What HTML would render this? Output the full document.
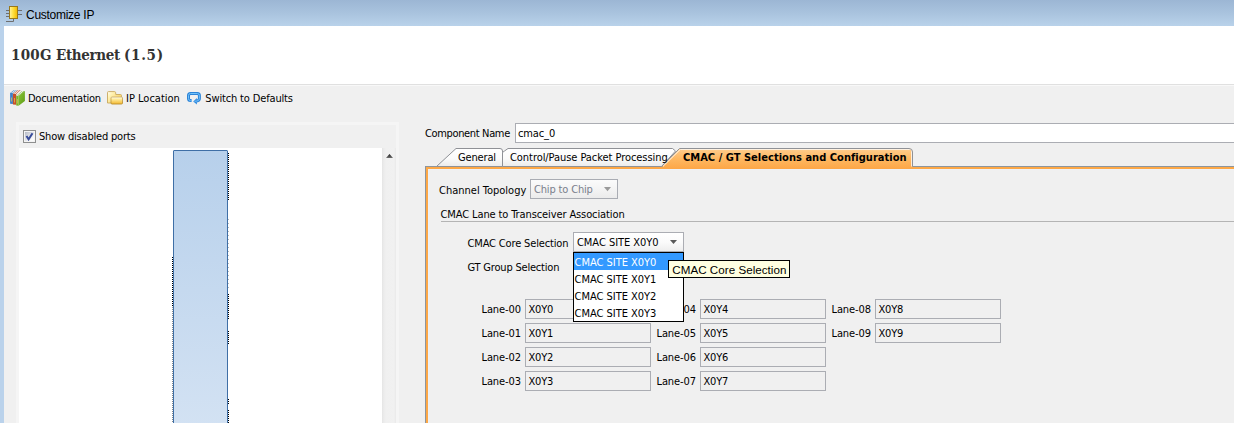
<!DOCTYPE html>
<html>
<head>
<meta charset="utf-8">
<title>Customize IP</title>
<style>
html,body{margin:0;padding:0;background:#fff;}
body{width:1236px;height:425px;overflow:hidden;position:relative;font-family:"Liberation Sans",sans-serif;font-size:11px;color:#000;}
#win{position:absolute;left:0;top:0;width:1234px;height:423px;overflow:hidden;background:#f0f0f0;}
.abs{position:absolute;}
.t{position:absolute;white-space:nowrap;line-height:14px;height:14px;font-size:11px;color:#000;font-family:"DejaVu Sans Condensed","Liberation Sans",sans-serif;}
.b{font-weight:bold;}
#titlebar{left:0;top:0;width:1234px;height:26px;background:linear-gradient(#9cb6d4 0%,#a9c3de 50%,#b9d2ea 100%);}
#lborder{left:0;top:26px;width:4px;height:397px;background:#bad2eb;}
#head{left:4px;top:26px;width:1230px;height:58px;background:#fff;}
#hl1{left:4px;top:84px;width:1230px;height:1px;background:#e0e0e0;}
#hl2{left:4px;top:85px;width:1230px;height:1px;background:#f8f8f8;}
.tk{width:1px;background:repeating-linear-gradient(#000 0,#000 1px,transparent 1px,transparent 2px);}
.tk.g{background:repeating-linear-gradient(#b8b8b8 0,#b8b8b8 1px,transparent 1px,transparent 4px);}
.tk.g2{background:repeating-linear-gradient(#8a8a8a 0,#8a8a8a 1px,transparent 1px,transparent 2px);}
.inp{position:absolute;box-sizing:border-box;border:1px solid #abadb3;height:20px;background:#f0f0f0;}
</style>
</head>
<body>
<div id="win">
  <div id="titlebar" class="abs"></div>
  <div id="lborder" class="abs"></div>
  <div id="head" class="abs"></div>
  <div id="hl1" class="abs"></div>
  <div id="hl2" class="abs"></div>

  <!-- title icon -->
  <svg class="abs" style="left:5px;top:5px" width="19" height="18" viewBox="0 0 19 18">
    <defs><linearGradient id="gy" x1="0" y1="0" x2="1" y2="0"><stop offset="0" stop-color="#fff3a0"/><stop offset="0.45" stop-color="#ffe040"/><stop offset="1" stop-color="#f2b800"/></linearGradient></defs>
    <g stroke="#6f6f6f" stroke-width="1" fill="none">
      <path d="M1 5.5H4M1 8.5H4M1 11.5H4M13 5.5H17M13 9.5H17M1 16.5H8.5V14"/>
    </g>
    <rect x="4.5" y="1.5" width="8" height="12" fill="url(#gy)" stroke="#98781c"/>
  </svg>
  <span class="t" id="t_title" style="font-family:'Liberation Sans',sans-serif;left:26px;top:7px;font-size:12px;line-height:16px;height:16px;letter-spacing:-0.27px;">Customize IP</span>

  <span class="t b" id="t_head" style="font-family:'DejaVu Serif Condensed','Liberation Serif',serif;font-size:15px;line-height:20px;height:20px;color:#333;left:11px;top:45px;width:160px;"><span class="abs" id="t_h1" style="left:0;top:0;letter-spacing:0.25px;">100G</span> <span class="abs" id="t_h2" style="left:45px;top:0;letter-spacing:-0.35px;">Ethernet</span> <span class="abs" id="t_h3" style="left:113px;top:0;letter-spacing:0.7px;">(1.5)</span></span>

  <!-- toolbar -->
  <svg class="abs" style="left:9px;top:89px" width="17" height="18" viewBox="0 0 17 18">
    <defs><linearGradient id="gg" x1="0" y1="0" x2="1" y2="1"><stop offset="0" stop-color="#8cc63a"/><stop offset="1" stop-color="#5c9c14"/></linearGradient></defs>
    <path d="M1.100 4.100H3.900L7.900 0.900H5.100Z" fill="#3f80c8"/>
    <path d="M1.900 4.100H3.200L7.200 0.900H5.900Z" fill="#f4f7fb"/>
    <path d="M3.900 5.100H7.200L11.700 1H9.100Z" fill="#c8542e"/>
    <path d="M4.900 5.100H6.400L10.900 1H9.700Z" fill="#fbf5f2"/>
    <path d="M7.200 6.900H9.600L15.900 2H13.100Z" fill="#64a21c"/>
    <path d="M7.600 6.900H8.900L15 2H13.500Z" fill="#f6f8f0"/>
    <path d="M1.100 4.100H3.900V14.900L1.100 14.700Z" fill="#3b80c9"/>
    <path d="M3.900 5.100H7.200V15.800L3.900 15.600Z" fill="#c6502a"/>
    <path d="M7.200 6.900H9.600V16.700L7.200 16.400Z" fill="#78b62a"/>
    <path d="M9.600 6.900L15.900 2V12.100L9.600 16.700Z" fill="url(#gg)"/>
    <path d="M2.500 8.500V12.500M5.500 9V13.500M8.400 10V14.500" stroke="#e2b94e" stroke-width="0.800" fill="none"/>
  </svg>
  <span class="t" id="t_doc" style="left:28px;top:92px;letter-spacing:-0.27px;">Documentation</span>

  <svg class="abs" style="left:106px;top:91px" width="18" height="15" viewBox="0 0 18 15">
    <defs><linearGradient id="gf" x1="0" y1="0" x2="0" y2="1"><stop offset="0" stop-color="#ffffff"/><stop offset="0.25" stop-color="#fff0a8"/><stop offset="1" stop-color="#f4b72c"/></linearGradient>
    <linearGradient id="gfb" x1="0" y1="0" x2="1" y2="0.700"><stop offset="0" stop-color="#fffef4"/><stop offset="0.3" stop-color="#fff2b4"/><stop offset="1" stop-color="#f6cc54"/></linearGradient>
    <linearGradient id="gfs" x1="0" y1="0" x2="0" y2="1"><stop offset="0" stop-color="#cdb070"/><stop offset="1" stop-color="#b98d2c"/></linearGradient></defs>
    <path d="M1.500 11V1.500Q1.500 0.600 2.500 0.600H8.500Q9.500 0.600 9.600 1.500L9.800 3.500H14.500Q15.500 3.500 15.500 4.500V12H1.500Z" fill="url(#gfb)" stroke="#c8a85e" stroke-width="0.900"/>
    <rect x="5" y="6" width="11.500" height="7" rx="1" fill="url(#gf)" stroke="url(#gfs)" stroke-width="0.900"/>
  </svg>
  <span class="t" id="t_loc" style="left:126px;top:92px;">IP Location</span>

  <svg class="abs" style="left:186px;top:91px" width="16" height="14" viewBox="0 0 16 14">
    <path d="M5.600 9.600H4.500Q2.500 9.600 2.500 7.600V4.500Q2.500 2.500 4.500 2.500H11.400Q13.400 2.500 13.400 4.500V7.600Q13.400 9.800 10.600 10.100" fill="none" stroke="#2c84d8" stroke-width="3"/>
    <path d="M7.200 10.400L10.900 7V13.400Z" fill="#2f8ae0"/>
    <path d="M5.600 9.600H4.500Q2.500 9.600 2.500 7.600V4.500Q2.500 2.500 4.500 2.500H11.400Q13.400 2.500 13.400 4.500V7.600Q13.400 9.800 10.600 10.100L8.500 10.300" fill="none" stroke="#72c2fa" stroke-width="1"/>
  </svg>
  <span class="t" id="t_def" style="left:205.3px;top:92px;letter-spacing:-0.15px;">Switch to Defaults</span>

  <!-- left panel -->
  <div class="abs" style="left:16px;top:122px;width:383px;height:301px;background:#f5f5f5;"></div>
  <div class="abs" style="left:19px;top:125px;width:377px;height:298px;background:#f0f0f0;"></div>
  <div class="abs" style="left:19px;top:148px;width:363px;height:275px;background:#fff;"></div>
  <!-- checkbox -->
  <div class="abs" style="left:23px;top:130px;width:13px;height:13px;box-sizing:border-box;border:1px solid #8e8f8f;background:#f4f4f4;">
    <div class="abs" style="left:1px;top:1px;width:9px;height:9px;background:linear-gradient(135deg,#b4b9c6 0%,#dfe1e6 45%,#fafafa 80%);"></div>
    <svg class="abs" style="left:1px;top:1px" width="9" height="9" viewBox="0 0 9 9"><path d="M1.500 4L3.600 7.300L7.500 1.200" fill="none" stroke="#384c9a" stroke-width="2"/></svg>
  </div>
  <span class="t" id="t_show" style="left:39px;top:130px;letter-spacing:-0.19px;">Show disabled ports</span>
  <!-- block -->
  <div class="abs" style="left:173px;top:150px;width:55px;height:280px;box-sizing:border-box;border:1px solid #3f6fa6;border-radius:1px 1px 0 0;background:linear-gradient(#b7d0eb,#d3e2f3);"></div>
  <div class="abs tk" style="left:228px;top:153px;height:48px;"></div>
  <div class="abs tk g" style="left:228px;top:219px;height:72px;"></div>
  <div class="abs tk" style="left:228px;top:294px;height:26px;"></div>
  <div class="abs tk" style="left:228px;top:331px;height:13px;"></div>
  <div class="abs tk" style="left:228px;top:399px;height:5px;"></div>
  <div class="abs tk" style="left:228px;top:410px;height:13px;"></div>
  <div class="abs tk" style="left:172px;top:257px;height:50px;"></div>
  <div class="abs tk g2" style="left:172px;top:307px;height:116px;"></div>
  <!-- scrollbar arrow -->
  <div class="abs" style="left:382px;top:148px;width:14px;height:275px;background:linear-gradient(to right,#e5e5e5 0,#ececec 2px,#f0f0f0 4px,#f1f1f1 12px,#e9e9e9 14px);"></div>
  <svg class="abs" style="left:385px;top:153px" width="9" height="6" viewBox="0 0 9 6"><defs><linearGradient id="ga" x1="0" y1="0" x2="0" y2="1"><stop offset="0" stop-color="#1a1a1a"/><stop offset="1" stop-color="#707070"/></linearGradient></defs><path d="M1 5L4.500 1L8 5Z" fill="url(#ga)"/></svg>

  <!-- right -->
  <span class="t" id="t_comp" style="left:425px;top:127px;letter-spacing:-0.35px;">Component Name</span>
  <div class="abs" style="left:515px;top:123px;width:730px;height:20px;box-sizing:border-box;border:1px solid #abadb3;background:#fff;"></div>
  <span class="t" id="t_cmac0" style="left:518px;top:127px;letter-spacing:-0.12px;">cmac_0</span>

  <!-- tab pane -->
  <div class="abs" style="left:425px;top:166px;width:820px;height:270px;box-sizing:border-box;border:1px solid #8e959c;background:#f0f0f0;"></div>
  <div class="abs" style="left:426px;top:167px;width:820px;height:270px;box-sizing:border-box;border:2px solid #fda847;"></div>
  <div class="abs" style="left:428px;top:169px;width:820px;height:270px;box-sizing:border-box;border:1px solid #eef2f7;"></div>
  <!-- tabs -->
  <svg class="abs" style="left:425px;top:146px" width="500" height="24" viewBox="0 0 500 24">
    <defs>
      <linearGradient id="gt" x1="0" y1="0" x2="0" y2="1"><stop offset="0" stop-color="#ffffff"/><stop offset="0.55" stop-color="#fbfbfb"/><stop offset="1" stop-color="#ebebeb"/></linearGradient>
      <linearGradient id="go" x1="0" y1="0" x2="0" y2="1"><stop offset="0" stop-color="#ffcd8e"/><stop offset="0.5" stop-color="#feb862"/><stop offset="1" stop-color="#fda646"/></linearGradient>
    </defs>
    <!-- General -->
    <path d="M11.500 20.500L31 2.500H75Q77.500 2.500 77.500 5V20.500Z" fill="url(#gt)" stroke="#8f9196"/>
    <!-- Control -->
    <path d="M77.500 20.500V6.500L79.500 5L83 2.500H247.500L250.500 5L236.500 20.500Z" fill="url(#gt)" stroke="#8f9196"/>
    <!-- selected -->
    <path d="M235 23L255 2.500H484Q487.500 2.500 487.500 6V23Z" fill="url(#go)"/>
    <path d="M238 20.500L255.300 3.500H486.500V20.500" fill="none" stroke="#fff" stroke-opacity="0.75"/>
    <path d="M236.500 20.500L254.500 2.500H484Q487.500 2.500 487.500 6V20.500" fill="none" stroke="#8f9196"/>
  </svg>
  <span class="t" id="t_gen" style="left:458px;top:151px;letter-spacing:-0.15px;">General</span>
  <span class="t" id="t_ctl" style="left:510px;top:151px;letter-spacing:-0.06px;">Control/Pause Packet Processing</span>
  <span class="t b" id="t_sel" style="left:683px;top:151px;letter-spacing:0.03px;">CMAC / GT Selections and Configuration</span>

  <span class="t" id="t_chan" style="left:439px;top:184px;">Channel Topology</span>
  <div class="abs" style="left:530px;top:179px;width:88px;height:20px;box-sizing:border-box;border:1px solid #a9acb3;background:linear-gradient(#fbfbfb 0%,#f4f4f4 50%,#ebebeb 100%);"></div>
  <span class="t" id="t_chip" style="left:534px;top:183px;color:#7a7f8c;letter-spacing:-0.16px;">Chip to Chip</span>
  <svg class="abs" style="left:604px;top:187px" width="7" height="5" viewBox="0 0 7 5"><path d="M0 0H7L3.500 4.300Z" fill="#9a9a9a"/></svg>

  <span class="t" id="t_assoc" style="left:440.5px;top:208px;letter-spacing:-0.11px;">CMAC Lane to Transceiver Association</span>
  <div class="abs" style="left:441px;top:221px;width:800px;height:1px;background:#b4b4b4;"></div>

  <span class="t" id="t_core" style="left:467.5px;top:237px;letter-spacing:-0.15px;">CMAC Core Selection</span>
  <div class="abs" style="left:573px;top:232px;width:111px;height:20px;box-sizing:border-box;border:1px solid #abadb3;background:linear-gradient(#ffffff 0%,#fbfbfb 50%,#eeeeee 100%);"></div>
  <span class="t" id="t_site" style="left:577px;top:236px;letter-spacing:-0.04px;">CMAC SITE X0Y0</span>
  <svg class="abs" style="left:670px;top:240px" width="7" height="4" viewBox="0 0 7 4"><path d="M0 0H7L3.500 4Z" fill="#5a5a5a"/></svg>

  <span class="t" id="t_gt" style="left:467.5px;top:261px;letter-spacing:-0.2px;">GT Group Selection</span>

  <!-- lanes -->
  <span class="t" id="t_l0" style="left:481.5px;top:303px;letter-spacing:-0.1px;">Lane-00</span><div class="inp" style="left:525px;top:299px;width:126px;"></div><span class="t" id="t_x0" style="left:528.5px;top:303px;letter-spacing:-0.2px;">X0Y0</span>
  <span class="t" id="t_l1" style="left:481.5px;top:327px;letter-spacing:-0.1px;">Lane-01</span><div class="inp" style="left:525px;top:323px;width:126px;"></div><span class="t" id="t_x1" style="left:528.5px;top:327px;letter-spacing:-0.2px;">X0Y1</span>
  <span class="t" id="t_l2" style="left:481.5px;top:351px;letter-spacing:-0.1px;">Lane-02</span><div class="inp" style="left:525px;top:347px;width:126px;"></div><span class="t" id="t_x2" style="left:528.5px;top:351px;letter-spacing:-0.2px;">X0Y2</span>
  <span class="t" id="t_l3" style="left:481.5px;top:375px;letter-spacing:-0.1px;">Lane-03</span><div class="inp" style="left:525px;top:371px;width:126px;"></div><span class="t" id="t_x3" style="left:528.5px;top:375px;letter-spacing:-0.2px;">X0Y3</span>

  <span class="t" id="t_l4" style="left:656.5px;top:303px;letter-spacing:-0.1px;">Lane-04</span><div class="inp" style="left:700px;top:299px;width:126px;"></div><span class="t" id="t_x4" style="left:703.5px;top:303px;letter-spacing:-0.2px;">X0Y4</span>
  <span class="t" id="t_l5" style="left:656.5px;top:327px;letter-spacing:-0.1px;">Lane-05</span><div class="inp" style="left:700px;top:323px;width:126px;"></div><span class="t" id="t_x5" style="left:703.5px;top:327px;letter-spacing:-0.2px;">X0Y5</span>
  <span class="t" id="t_l6" style="left:656.5px;top:351px;letter-spacing:-0.1px;">Lane-06</span><div class="inp" style="left:700px;top:347px;width:126px;"></div><span class="t" id="t_x6" style="left:703.5px;top:351px;letter-spacing:-0.2px;">X0Y6</span>
  <span class="t" id="t_l7" style="left:656.5px;top:375px;letter-spacing:-0.1px;">Lane-07</span><div class="inp" style="left:700px;top:371px;width:126px;"></div><span class="t" id="t_x7" style="left:703.5px;top:375px;letter-spacing:-0.2px;">X0Y7</span>

  <span class="t" id="t_l8" style="left:831.5px;top:303px;letter-spacing:-0.1px;">Lane-08</span><div class="inp" style="left:875px;top:299px;width:126px;"></div><span class="t" id="t_x8" style="left:878.5px;top:303px;letter-spacing:-0.2px;">X0Y8</span>
  <span class="t" id="t_l9" style="left:831.5px;top:327px;letter-spacing:-0.1px;">Lane-09</span><div class="inp" style="left:875px;top:323px;width:126px;"></div><span class="t" id="t_x9" style="left:878.5px;top:327px;letter-spacing:-0.2px;">X0Y9</span>

  <!-- dropdown -->
  <div class="abs" style="left:573px;top:252px;width:111px;height:70px;box-sizing:border-box;border:1px solid #000;background:#fff;"></div>
  <div class="abs" style="left:574px;top:253px;width:109px;height:17px;background:#3399ff;"></div>
  <span class="t" id="t_d0" style="letter-spacing:-0.02px;left:574.5px;top:256px;color:#fff;">CMAC SITE X0Y0</span>
  <span class="t" id="t_d1" style="letter-spacing:-0.02px;left:574.5px;top:273px;">CMAC SITE X0Y1</span>
  <span class="t" id="t_d2" style="letter-spacing:-0.02px;left:574.5px;top:290px;">CMAC SITE X0Y2</span>
  <span class="t" id="t_d3" style="letter-spacing:-0.02px;left:574.5px;top:307px;">CMAC SITE X0Y3</span>

  <!-- tooltip -->
  <div class="abs" style="left:668px;top:260px;width:122px;height:18px;box-sizing:border-box;border:1px solid #000;background:#ffffe1;"></div>
  <span class="t" id="t_tip" style="font-family:'Liberation Sans',sans-serif;left:672.3px;top:262px;font-size:11.6px;line-height:16px;height:16px;letter-spacing:0.04px;">CMAC Core Selection</span>
</div>
</body>
</html>
